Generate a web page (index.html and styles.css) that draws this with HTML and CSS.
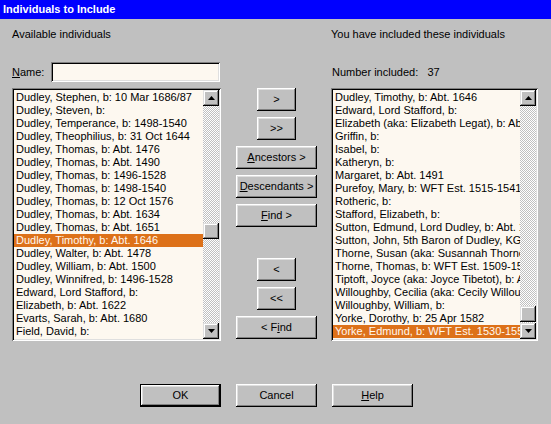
FILE: index.html
```html
<!DOCTYPE html>
<html>
<head>
<meta charset="utf-8">
<title>Individuals to Include</title>
<link rel="stylesheet" href="styles.css">
</head>
<body>
<div class="window">
  <div class="titlebar">Individuals to Include</div>
  <div class="content">
    <div class="columns">
      <div class="col col-left">
        <div class="label">Available individuals</div>
        <div class="name-row">
          <span class="name-label"><u>N</u>ame:</span>
          <div class="field"></div>
        </div>
        <div class="listbox">
          <ul class="items">
            <li>Dudley, Stephen, b: 10 Mar 1686/87</li>
            <li>Dudley, Steven, b:</li>
            <li>Dudley, Temperance, b: 1498-1540</li>
            <li>Dudley, Theophilius, b: 31 Oct 1644</li>
            <li>Dudley, Thomas, b: Abt. 1476</li>
            <li>Dudley, Thomas, b: Abt. 1490</li>
            <li>Dudley, Thomas, b: 1496-1528</li>
            <li>Dudley, Thomas, b: 1498-1540</li>
            <li>Dudley, Thomas, b: 12 Oct 1576</li>
            <li>Dudley, Thomas, b: Abt. 1634</li>
            <li>Dudley, Thomas, b: Abt. 1651</li>
            <li class="sel">Dudley, Timothy, b: Abt. 1646</li>
            <li>Dudley, Walter, b: Abt. 1478</li>
            <li>Dudley, William, b: Abt. 1500</li>
            <li>Dudley, Winnifred, b: 1496-1528</li>
            <li>Edward, Lord Stafford, b:</li>
            <li>Elizabeth, b: Abt. 1622</li>
            <li>Evarts, Sarah, b: Abt. 1680</li>
            <li>Field, David, b:</li>
          </ul>
          <div class="scrollbar">
            <div class="sbtn"><svg width="7" height="4" viewBox="0 0 7 4"><polygon points="3.5,0 7,4 0,4" fill="#000"/></svg></div>
            <div class="track"><div class="thumb" style="margin-top:117px"></div></div>
            <div class="sbtn"><svg width="7" height="4" viewBox="0 0 7 4"><polygon points="0,0 7,0 3.5,4" fill="#000"/></svg></div>
          </div>
        </div>
      </div>

      <div class="col col-mid">
        <div class="btn small">&gt;</div>
        <div class="btn small">&gt;&gt;</div>
        <div class="btn"><u>A</u>ncestors &gt;</div>
        <div class="btn"><u>D</u>escendants &gt;</div>
        <div class="btn"><u>F</u>ind &gt;</div>
        <div class="btn small spaced">&lt;</div>
        <div class="btn small">&lt;&lt;</div>
        <div class="btn">&lt; F<u>i</u>nd</div>
      </div>

      <div class="col col-right">
        <div class="label">You have included these individuals</div>
        <div class="count-row">Number included:&nbsp;&nbsp; 37</div>
        <div class="listbox">
          <ul class="items">
            <li>Dudley, Timothy, b: Abt. 1646</li>
            <li>Edward, Lord Stafford, b:</li>
            <li>Elizabeth (aka: Elizabeth Legat), b: Abt. 1450</li>
            <li>Griffin, b:</li>
            <li>Isabel, b:</li>
            <li>Katheryn, b:</li>
            <li>Margaret, b: Abt. 1491</li>
            <li>Purefoy, Mary, b: WFT Est. 1515-1541</li>
            <li>Rotheric, b:</li>
            <li>Stafford, Elizabeth, b:</li>
            <li>Sutton, Edmund, Lord Dudley, b: Abt. 1425</li>
            <li>Sutton, John, 5th Baron of Dudley, KG, b: 1400</li>
            <li>Thorne, Susan (aka: Susannah Thorne), b:</li>
            <li>Thorne, Thomas, b: WFT Est. 1509-1535</li>
            <li>Tiptoft, Joyce (aka: Joyce Tibetot), b: Abt. 1403</li>
            <li>Willoughby, Cecilia (aka: Cecily Willoughby), b:</li>
            <li>Willoughby, William, b:</li>
            <li>Yorke, Dorothy, b: 25 Apr 1582</li>
            <li class="sel">Yorke, Edmund, b: WFT Est. 1530-1558</li>
          </ul>
          <div class="scrollbar">
            <div class="sbtn"><svg width="7" height="4" viewBox="0 0 7 4"><polygon points="3.5,0 7,4 0,4" fill="#000"/></svg></div>
            <div class="track"><div class="thumb" style="margin-top:200px"></div></div>
            <div class="sbtn"><svg width="7" height="4" viewBox="0 0 7 4"><polygon points="0,0 7,0 3.5,4" fill="#000"/></svg></div>
          </div>
        </div>
      </div>
    </div>

    <div class="actions">
      <div class="btn default">OK</div>
      <div class="btn">Cancel</div>
      <div class="btn"><u>H</u>elp</div>
    </div>
  </div>
</div>
</body>
</html>
```
FILE: styles.css
```css
html, body {
  margin: 0;
  padding: 0;
}
body {
  width: 551px;
  height: 424px;
  background: #c0c0c0;
  font-family: "Liberation Sans", Arial, sans-serif;
  font-size: 11px;
  line-height: 13px;
  color: #000;
  overflow: hidden;
}
.window {
  display: flex;
  flex-direction: column;
  height: 424px;
}
.titlebar {
  height: 19px;
  line-height: 18px;
  background: #0000ff;
  color: #fff;
  font-weight: bold;
  padding-left: 3px;
  box-sizing: border-box;
}
.content {
  padding: 9px 0 0 12px;
}
.columns {
  display: flex;
  align-items: flex-start;
}
.col {
  display: flex;
  flex-direction: column;
}
.col-left {
  width: 209px;
}
.col-mid {
  width: 81px;
  margin-left: 15px;
  margin-top: 60px;
  align-items: center;
}
.col-right {
  width: 207px;
  margin-left: 14px;
}
.label {
  height: 13px;
}
.name-row {
  margin-top: 21px;
  display: flex;
  align-items: center;
  height: 20px;
}
.name-label {
  width: 39px;
}
.field {
  width: 169px;
  height: 20px;
  box-sizing: border-box;
  background: #fdf8f0;
  box-shadow: inset 1px 1px #808080, inset -1px -1px #fff, inset 2px 2px #000, inset -2px -2px #dfdfdf;
}
.count-row {
  margin-top: 21px;
  height: 20px;
  line-height: 20px;
  padding-left: 1px;
}
.listbox {
  margin-top: 6px;
  height: 253px;
  box-sizing: border-box;
  padding: 2px;
  display: flex;
  background: #fdf8f0;
  box-shadow: inset 1px 1px #808080, inset -1px -1px #fff, inset 2px 2px #000, inset -2px -2px #dfdfdf;
}
.items {
  list-style: none;
  margin: 0;
  padding: 1px 0 0 0;
  flex: 1;
  min-width: 0;
  overflow: hidden;
}
.items li {
  height: 13px;
  line-height: 13px;
  padding-left: 2px;
  white-space: nowrap;
  overflow: hidden;
}
.items li.sel {
  background: #dd7119;
  color: #fff8f0;
}
.scrollbar {
  width: 16px;
  display: flex;
  flex-direction: column;
}
.sbtn {
  width: 16px;
  height: 16px;
  flex: none;
  background: #c0c0c0;
  display: flex;
  align-items: center;
  justify-content: center;
  box-shadow: inset -1px -1px #000, inset 1px 1px #dfdfdf, inset -2px -2px #808080, inset 2px 2px #fff;
}
.sbtn svg {
  display: block;
}
.track {
  flex: 1;
  background: repeating-conic-gradient(#ffffff 0 25%, #c0c0c0 0 50%) 0 0 / 2px 2px;
}
.thumb {
  height: 16px;
  background: #c0c0c0;
  box-shadow: inset -1px -1px #000, inset 1px 1px #dfdfdf, inset -2px -2px #808080, inset 2px 2px #fff;
}
.btn {
  width: 81px;
  height: 23px;
  box-sizing: border-box;
  display: flex;
  align-items: center;
  justify-content: center;
  background: #c0c0c0;
  box-shadow: inset -1px -1px #000, inset 1px 1px #fff, inset -2px -2px #808080, inset 2px 2px #dfdfdf;
}
.col-mid .btn {
  margin-top: 6px;
}
.col-mid .btn:first-child {
  margin-top: 0;
}
.btn.small {
  width: 39px;
}
.col-mid .btn.spaced {
  margin-top: 31px;
}
.actions {
  display: flex;
  gap: 15px;
  margin-top: 43px;
  padding-left: 128px;
}
.btn.default {
  border: 1px solid #000;
}
u {
  text-decoration: underline;
  text-underline-offset: 1px;
}
```
